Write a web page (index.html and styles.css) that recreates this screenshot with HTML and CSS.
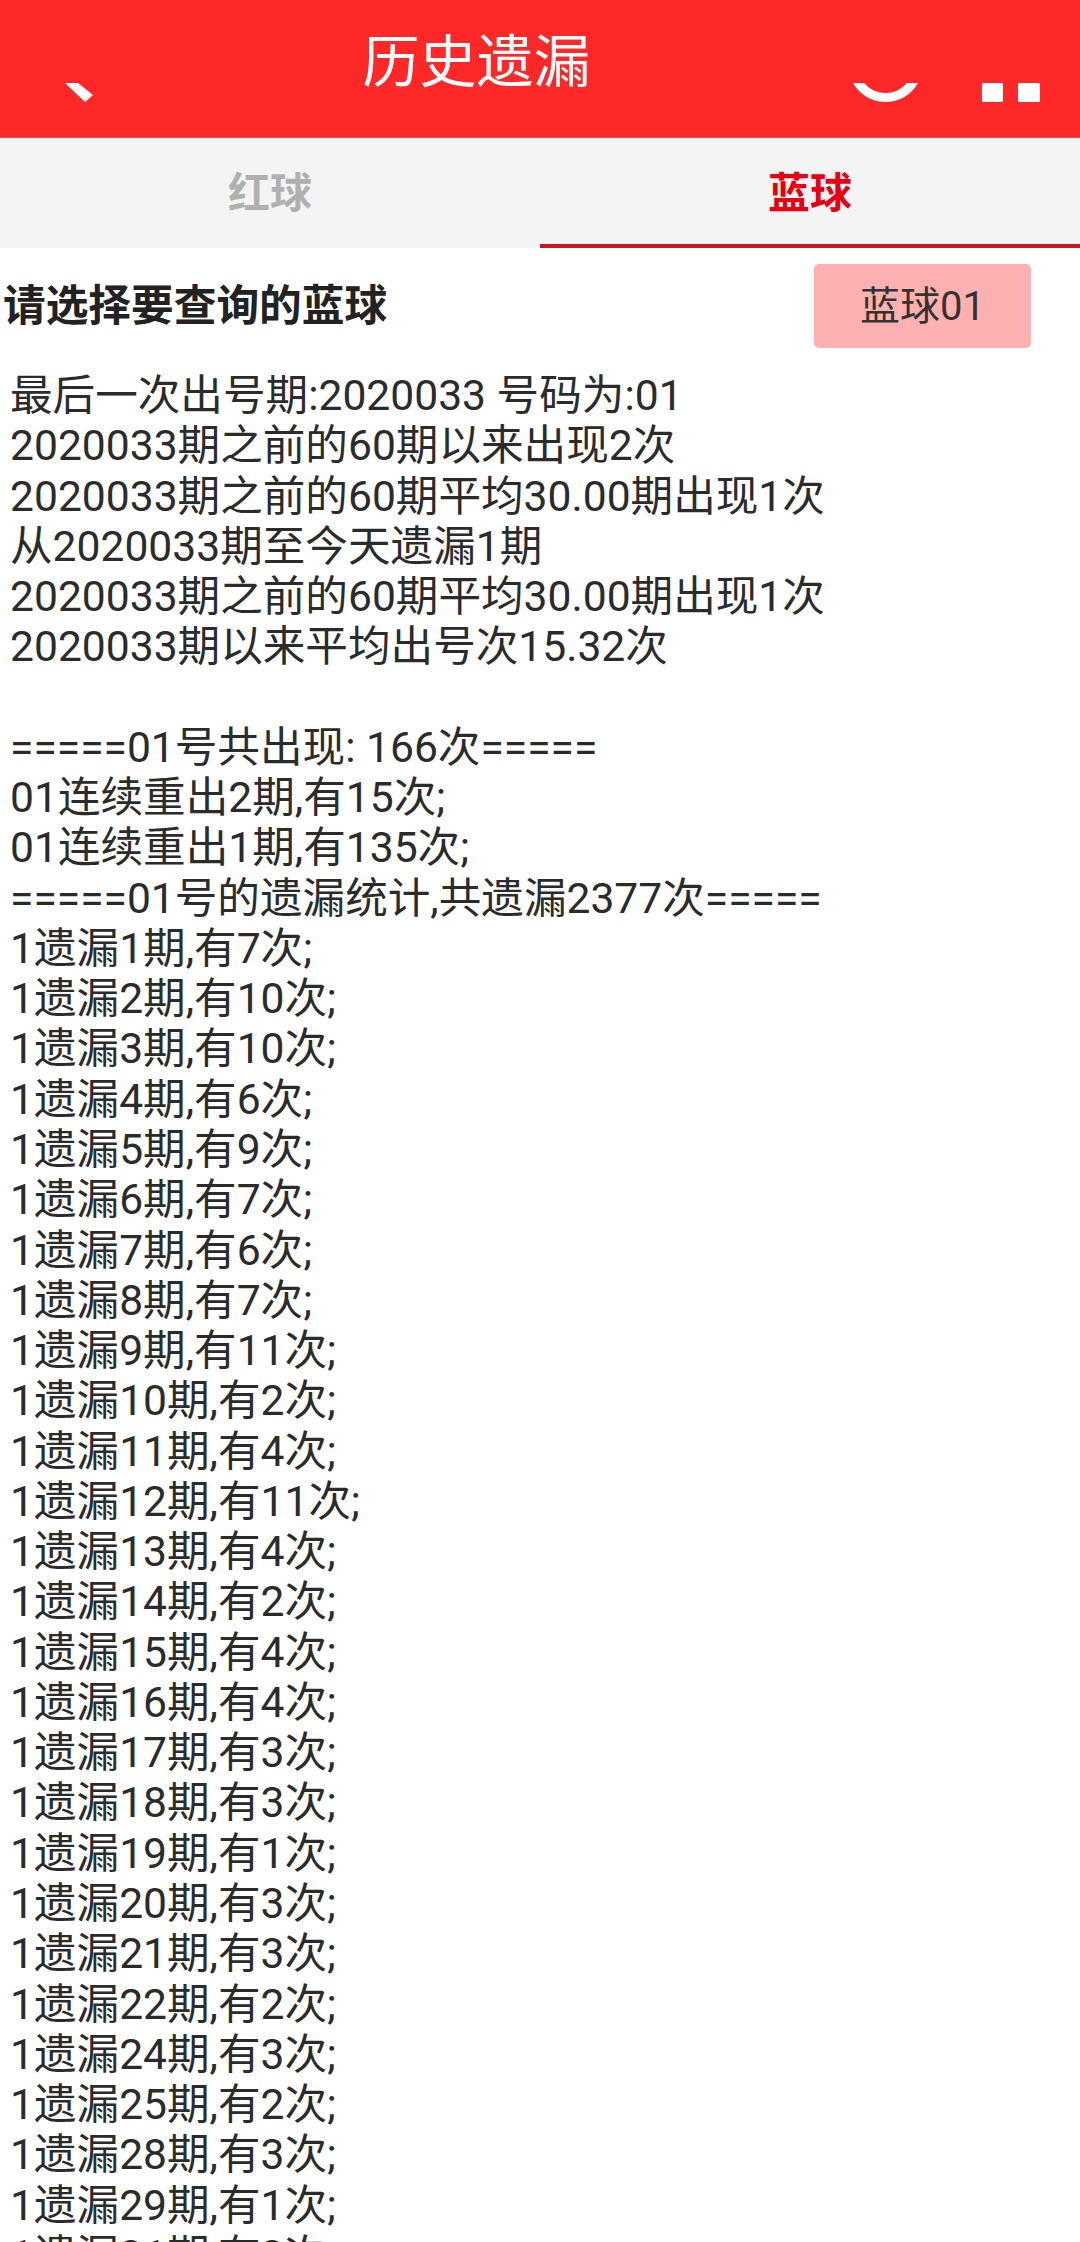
FILE: index.html
```html
<!DOCTYPE html>
<html lang="zh-CN">
<head>
<meta charset="utf-8">
<title>历史遗漏</title>
<link rel="stylesheet" href="styles.css">
</head>
<body>
<div class="page">
  <header class="appbar">
    <svg class="icon-back" viewBox="0 0 35 20" width="35" height="20"><polygon points="0,0 13,0 28,12 20,19" fill="#fff"/></svg>
    <h1 class="title">历史遗漏</h1>
    <div class="appbar-actions">
      <svg class="icon-smile" viewBox="0 0 65 20" width="65" height="20"><path d="M0 0 A37.3 37.3 0 0 0 65 0 L54 0 A28 28 0 0 1 11 0 Z" fill="#fff"/></svg>
      <svg class="icon-dots" viewBox="0 0 58 20" width="58" height="20"><rect x="0" y="0" width="21" height="19" rx="1.5" fill="#fff"/><rect x="36" y="0" width="22" height="19" rx="1.5" fill="#fff"/></svg>
    </div>
  </header>
  <nav class="tabs">
    <div class="tab">红球</div>
    <div class="tab tab-active">蓝球</div>
  </nav>
  <section class="picker">
    <h2 class="picker-label">请选择要查询的蓝球</h2>
    <div class="picker-button">蓝球01</div>
  </section>
  <p class="report">最后一次出号期:2020033 号码为:01
2020033期之前的60期以来出现2次
2020033期之前的60期平均30.00期出现1次
从2020033期至今天遗漏1期
2020033期之前的60期平均30.00期出现1次
2020033期以来平均出号次15.32次

=====01号共出现: 166次=====
01连续重出2期,有15次;
01连续重出1期,有135次;
=====01号的遗漏统计,共遗漏2377次=====
1遗漏1期,有7次;
1遗漏2期,有10次;
1遗漏3期,有10次;
1遗漏4期,有6次;
1遗漏5期,有9次;
1遗漏6期,有7次;
1遗漏7期,有6次;
1遗漏8期,有7次;
1遗漏9期,有11次;
1遗漏10期,有2次;
1遗漏11期,有4次;
1遗漏12期,有11次;
1遗漏13期,有4次;
1遗漏14期,有2次;
1遗漏15期,有4次;
1遗漏16期,有4次;
1遗漏17期,有3次;
1遗漏18期,有3次;
1遗漏19期,有1次;
1遗漏20期,有3次;
1遗漏21期,有3次;
1遗漏22期,有2次;
1遗漏24期,有3次;
1遗漏25期,有2次;
1遗漏28期,有3次;
1遗漏29期,有1次;
1遗漏31期,有3次;</p>
</div>
</body>
</html>
```
FILE: styles.css
```css
html, body {
  margin: 0;
  padding: 0;
  background: #fff;
}
.page {
  width: 1080px;
  height: 2242px;
  overflow: hidden;
  font-family: Roboto, "Noto Sans CJK SC", sans-serif;
  color: #2b2b2b;
}
.appbar {
  display: flex;
  align-items: flex-start;
  height: 137px;
  padding: 0 40px 0 65px;
  background: #ff2828;
  border-bottom: 1px solid #d9474a;
}
.icon-back {
  margin-top: 83px;
  flex: none;
}
.title {
  flex: 1;
  margin: 28px 0 0;
  font-size: 57px;
  font-weight: 400;
  line-height: 70px;
  text-align: center;
  color: #fff;
}
.appbar-actions {
  display: flex;
  gap: 64px;
  margin-top: 83px;
}
.icon-smile, .icon-dots {
  display: block;
}
.tabs {
  display: flex;
  height: 110px;
  background: #f4f4f4;
}
.tab {
  flex: 1;
  box-sizing: border-box;
  padding-top: 31px;
  font-size: 42px;
  font-weight: 700;
  line-height: 50px;
  text-align: center;
  color: #b0b0b0;
}
.tab-active {
  color: #e60012;
  border-bottom: 4px solid #c8161d;
}
.picker {
  display: flex;
  justify-content: space-between;
  align-items: center;
  padding: 16px 49px 0 3px;
}
.picker-label {
  margin: 0;
  font-size: 42.7px;
  font-weight: 700;
  line-height: 50px;
  color: #222;
}
.picker-button {
  display: flex;
  align-items: center;
  justify-content: center;
  box-sizing: border-box;
  width: 217px;
  height: 84px;
  padding-bottom: 6px;
  border-radius: 5px;
  background: #ffb1b1;
  font-size: 40px;
  color: #333;
}
.report {
  margin: 22px 0 0;
  padding-left: 10px;
  font-size: 42.6px;
  line-height: 50.27px;
  white-space: pre-line;
}
```
